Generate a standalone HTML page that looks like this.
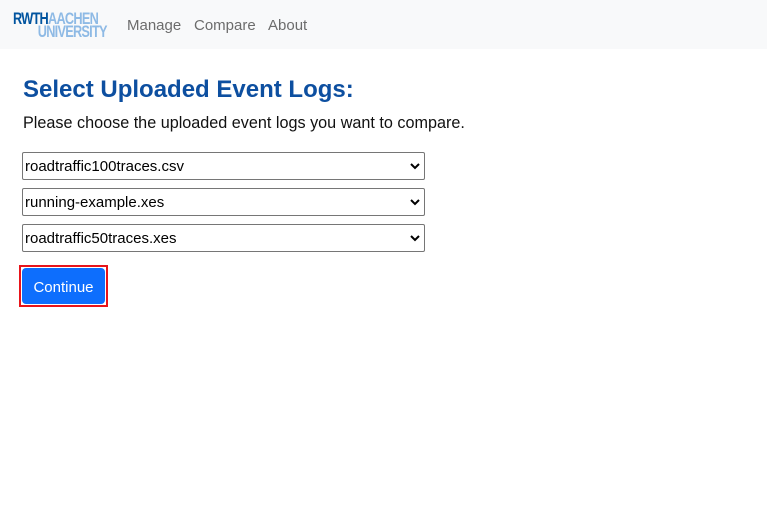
<!DOCTYPE html>
<html><head><meta charset="utf-8"><style>
body{margin:0;width:767px;height:524px;background:#fff;font-family:"Liberation Sans",sans-serif;position:relative;overflow:hidden}
.nav{position:absolute;left:0;top:0;width:767px;height:49px;background:#f8f9fa}
.logo{position:absolute;left:13px;top:12px;font-size:17px;line-height:13px;letter-spacing:-1px;transform:scaleX(0.75);transform-origin:left;white-space:nowrap}
.l1{color:#00549f;font-weight:bold}.l1 span{color:#8ebae5}
.l2{color:#8ebae5;font-weight:bold;padding-left:33px}
.nl{position:absolute;top:17px;font-size:15px;color:#6c6c6c}
h1{position:absolute;left:23px;top:76px;margin:0;font-size:24px;color:#0d4fa0;font-weight:bold}
p{position:absolute;left:23px;top:114px;margin:0;font-size:16.2px;color:#111}
.sel{position:absolute;left:22px;width:401px;height:26px;border:1px solid #767676;border-radius:2px;font-size:15px;line-height:28px;color:#000}
.sel span{padding-left:2px}
.sel svg{position:absolute;right:4px;top:9px}
.btnw{position:absolute;left:19px;top:265px;width:85px;height:38px;border:2px solid #e8141a}
.btn{position:absolute;left:1px;top:1px;width:83px;height:36px;background:#0d6efd;border-radius:4px;color:#fff;font-size:15px;text-align:center;line-height:40px}
</style></head><body>
<div class="nav">
<div class="logo"><div class="l1">RWTH<span>AACHEN</span></div><div class="l2">UNIVERSITY</div></div>
<div class="nl" style="left:127px">Manage</div>
<div class="nl" style="left:194px">Compare</div>
<div class="nl" style="left:268px">About</div>
</div>
<h1>Select Uploaded Event Logs:</h1>
<p>Please choose the uploaded event logs you want to compare.</p>
<div class="sel" style="top:152px"><span>roadtraffic100traces.csv</span><svg width="10" height="8"><path d="M1 2l4 4 4-4" stroke="#000" stroke-width="2" fill="none"/></svg></div>
<div class="sel" style="top:188px"><span>running-example.xes</span><svg width="10" height="8"><path d="M1 2l4 4 4-4" stroke="#000" stroke-width="2" fill="none"/></svg></div>
<div class="sel" style="top:224px"><span>roadtraffic50traces.xes</span><svg width="10" height="8"><path d="M1 2l4 4 4-4" stroke="#000" stroke-width="2" fill="none"/></svg></div>
<div class="btnw"><div class="btn">Continue</div></div>
</body></html>
